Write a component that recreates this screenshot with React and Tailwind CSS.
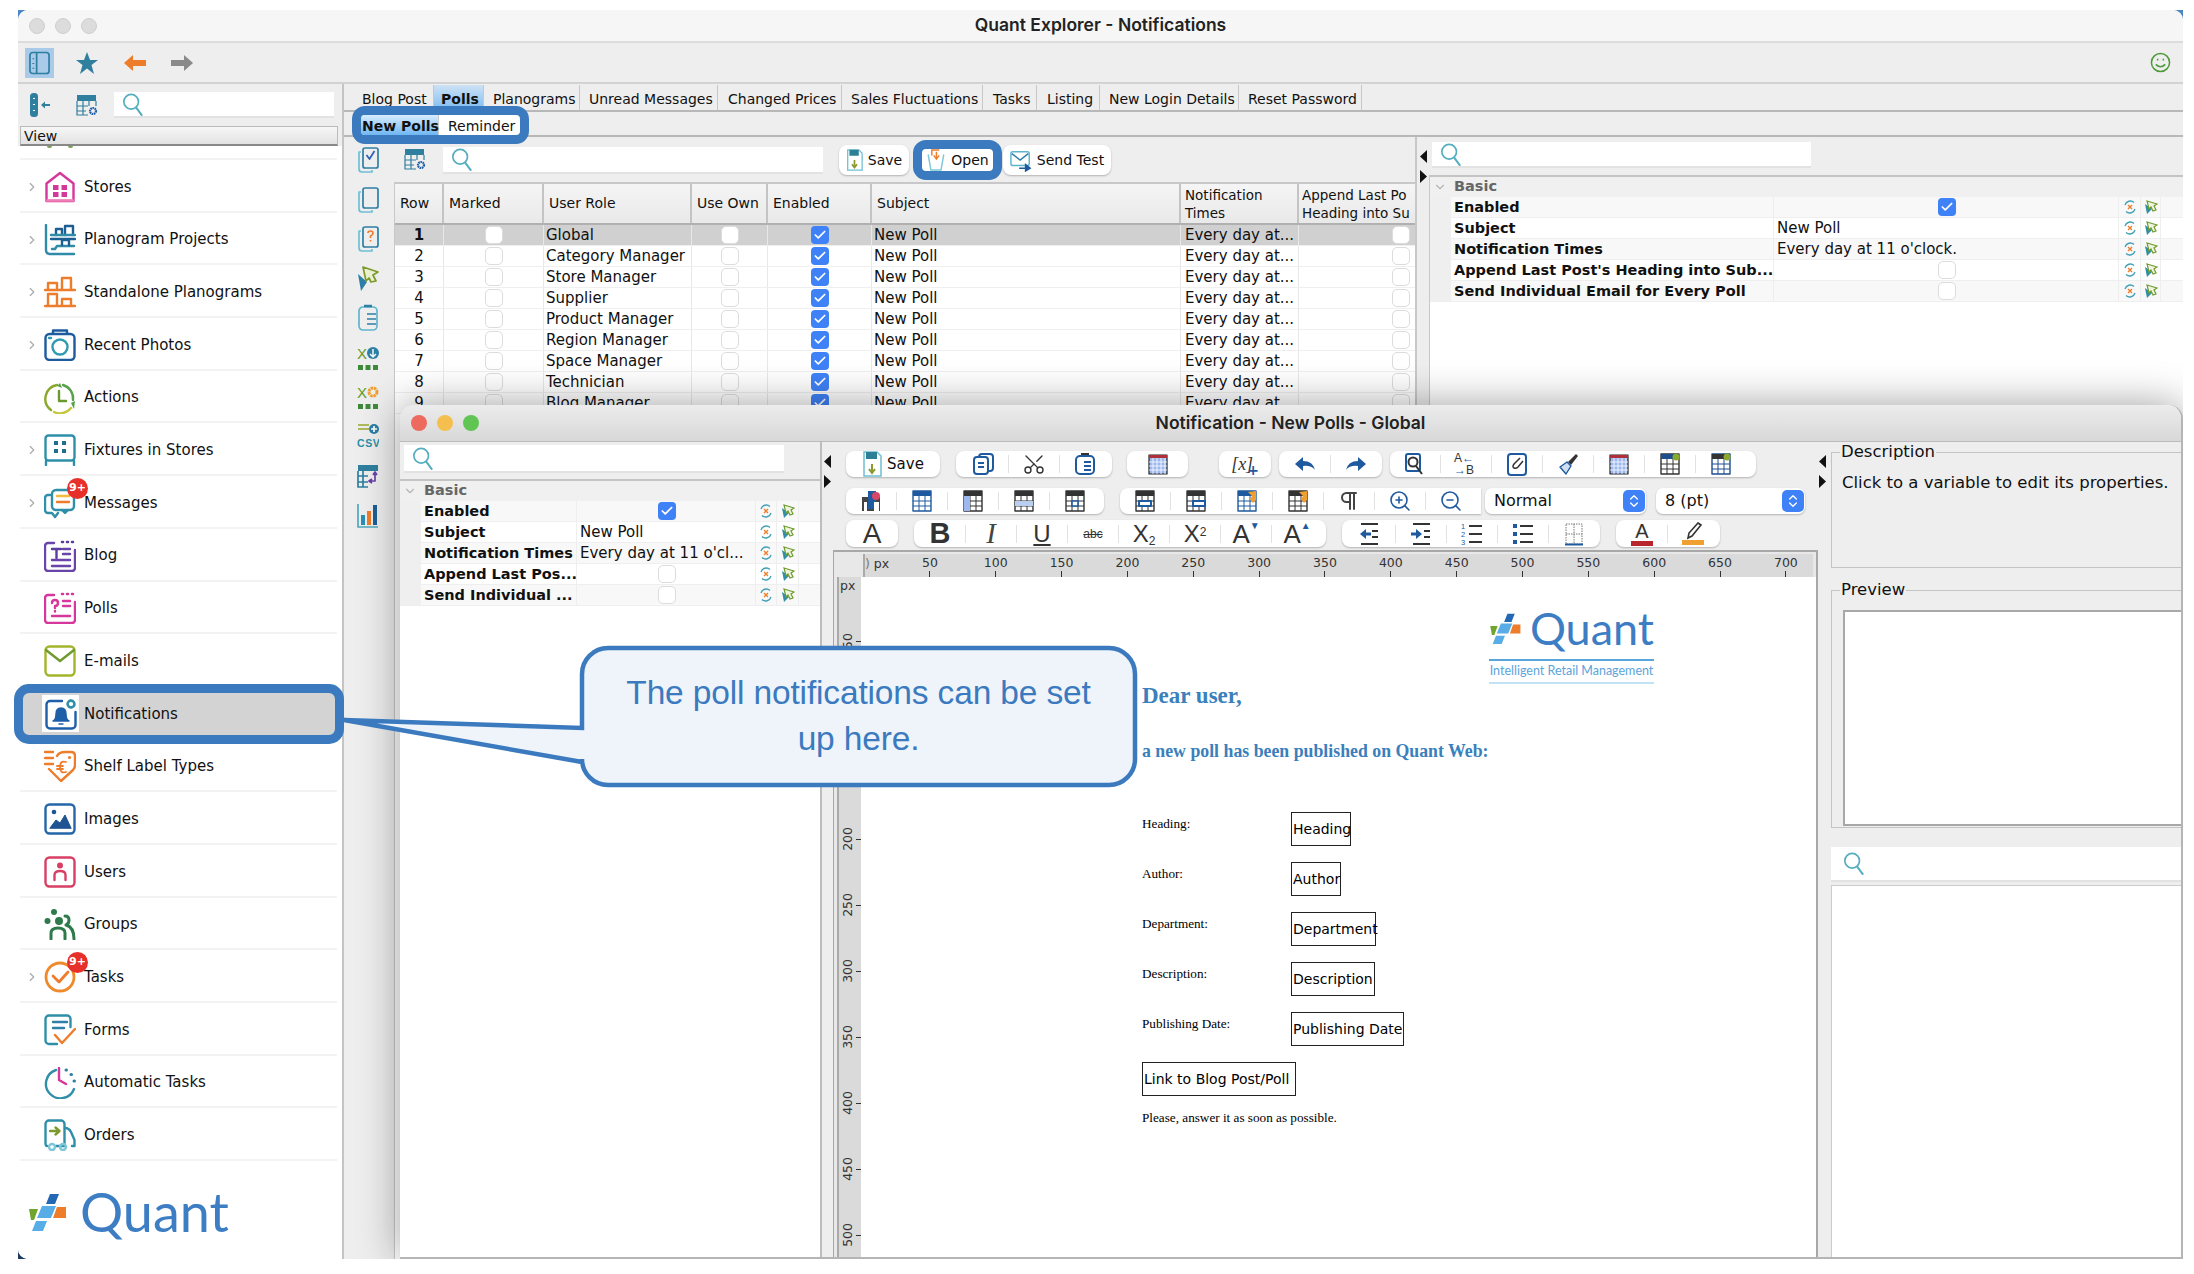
import { ChevronRight, ChevronDown, ChevronsUpDown, Check, Scissors, ZoomIn, ZoomOut, Pilcrow } from "lucide-react";

const Sb = ({ children }) => (
  <svg viewBox="0 0 32 32" className="w-8 h-8 shrink-0" fill="none" strokeWidth="2.4" strokeLinecap="round" strokeLinejoin="round">
    {children}
  </svg>
);

const Ic = ({ children, size = "w-6 h-6" }) => (
  <svg viewBox="0 0 24 24" className={`${size} shrink-0`} fill="none" strokeWidth="2" strokeLinejoin="round">
    {children}
  </svg>
);

// sidebar icons
const icons = {
  stores: (
    <Sb>
      <path d="M2.500 30V12.500L16 2l13.500 10.500V30z" stroke="#d6379a" />
      <path d="M9 14h5.500v5H9zM17.500 14H23v5h-5.500zM9 21h5.500v5H9zM17.500 21H23v5h-5.500z" fill="#d6379a" />
      <path d="M3 29.500h26" stroke="#ef7fb6" />
    </Sb>
  ),
  projects: (
    <Sb>
      <path d="M2 1v25q0 4 4 4h24" stroke="#2f8ba8" />
      <path d="M7 15h24" stroke="#1d5f92" />
      <path d="M8 25h3l2-3h17" stroke="#2f8ba8" />
      <path d="M12 11V5h6v6M21 11V2h8v9M18 21v-5h7v5" stroke="#1d5f92" />
      <path d="M7 11h24" stroke="#2f8ba8" />
    </Sb>
  ),
  standalone: (
    <Sb>
      <path d="M1 14h30M1 30h30" stroke="#ee7d2b" />
      <path d="M4 13V7h9v6M18 13V2h9v11M4 29V18h9v11M18 29v-6h9v6" stroke="#ee7d2b" />
    </Sb>
  ),
  photos: (
    <Sb>
      <rect x="1.500" y="5" width="29" height="26" rx="4" stroke="#1d5b9e" />
      <path d="M9 4V1.500h14V4" stroke="#1d5b9e" />
      <circle cx="16" cy="18" r="7.500" stroke="#2f9bb3" />
      <path d="M5 9h2" stroke="#2f9bb3" />
    </Sb>
  ),
  actions: (
    <Sb>
      <path d="M13 3A14 14 0 0 0 7 28" stroke="#8aa82b" />
      <path d="M10 30a14 14 0 0 0 17-4" stroke="#c5c73a" />
      <path d="M19 3a14 14 0 0 1 10 15" stroke="#58a14b" />
      <path d="M15 9v10h7" stroke="#6a9a2e" />
      <path d="M27 21l4-2-1 8zM16 1l-3 3 5 2z" fill="#58a14b" stroke="none" />
    </Sb>
  ),
  fixtures: (
    <Sb>
      <rect x="1.500" y="1.500" width="29" height="25" rx="3" stroke="#2f8fa8" />
      <path d="M2 27v4M30 27v4" stroke="#2f8fa8" />
      <path d="M10 7h4v4h-4zM18 7h4v4h-4zM10 15h4v4h-4zM18 15h4v4h-4z" fill="#1f6f8f" />
    </Sb>
  ),
  messages: (
    <Sb>
      <path d="M6 8H4a3 3 0 0 0-3 3v12a3 3 0 0 0 3 3h4l3 4 3-4" stroke="#2f8fa8" />
      <rect x="8" y="3" width="22" height="20" rx="4" stroke="#2f8fa8" />
      <path d="M13 9h12" stroke="#f3bd3a" />
      <path d="M13 15h12" stroke="#ee7d2b" />
      <path d="M18 23l3 3 3-3" stroke="#2f8fa8" />
    </Sb>
  ),
  blog: (
    <Sb>
      <path d="M10 3H4a3 3 0 0 0-3 3v22a3 3 0 0 0 3 3h24a3 3 0 0 0 3-3V10" stroke="#6a44a8" />
      <path d="M18 2h1M23 2h1M28 2h1" stroke="#5b3da0" strokeWidth="2.600" />
      <path d="M8 9h9M12.500 9v9" stroke="#5b3da0" />
      <path d="M19 9h7M19 14h7M8 20h18M8 26h18" stroke="#6a44a8" />
    </Sb>
  ),
  polls: (
    <Sb>
      <path d="M10 3H4a3 3 0 0 0-3 3v22a3 3 0 0 0 3 3h24a3 3 0 0 0 3-3V10" stroke="#d6379a" />
      <path d="M18 2h1M23 2h1M28 2h1" stroke="#d6379a" strokeWidth="2.600" />
      <path d="M8 11q0-3 3-3t3 3-3 3v2M11 19v.5" stroke="#d6379a" />
      <path d="M19 9h7M19 14h7M8 24h18" stroke="#d6379a" />
    </Sb>
  ),
  emails: (
    <Sb>
      <rect x="1.500" y="1.500" width="29" height="29" rx="4" stroke="#a4b52c" />
      <path d="M2 5l14 11L30 5" stroke="#6f9a2e" />
    </Sb>
  ),
  notifications: (
    <Sb>
      <path d="M17 3H5a3.500 3.500 0 0 0-3.500 3.500V27A3.500 3.500 0 0 0 5 30.500h22a3.500 3.500 0 0 0 3.500-3.500V14" stroke="#1f5fa8" />
      <path d="M8 23q3-1 3-7t5-6q5 0 5 6t3 7zM14 26h4" fill="#1f5fa8" stroke="#1f5fa8" strokeWidth="1.400" />
      <circle cx="26" cy="6" r="3.400" stroke="#2f8fa8" strokeWidth="2.600" strokeDasharray="2 .6" />
    </Sb>
  ),
  labels: (
    <Sb>
      <path d="M1 2h8M1 8h8M1 14h8" stroke="#ee7d2b" />
      <path d="M13 6q2-4 8-4h6q4 0 4 4v9q0 3-2 5L17 31 5 19" stroke="#ee7d2b" />
      <circle cx="25.500" cy="7.500" r="1.600" fill="#ee7d2b" stroke="none" />
      <path d="M22 12q-6-2-6 5t6 5M13 16h6M13 19h6" stroke="#ee7d2b" strokeWidth="1.800" />
    </Sb>
  ),
  images: (
    <Sb>
      <rect x="1.500" y="1.500" width="29" height="29" rx="4" stroke="#2466a8" />
      <circle cx="10" cy="9" r="2.300" fill="#1f5391" stroke="none" />
      <path d="M6 25l6-8 4 3 5-8 6 13z" fill="#1f5391" stroke="#1f5391" strokeWidth="1" />
    </Sb>
  ),
  users: (
    <Sb>
      <rect x="1.500" y="1.500" width="29" height="29" rx="4" stroke="#d83f64" />
      <circle cx="16" cy="9.500" r="3" fill="#d83f64" stroke="none" />
      <path d="M10.500 24v-5q0-4 5.500-4t5.500 4v5" stroke="#d83f64" />
    </Sb>
  ),
  groups: (
    <Sb>
      <circle cx="10" cy="4" r="3" fill="#2e7a4b" stroke="none" />
      <circle cx="3.500" cy="13" r="3" fill="#2e7a4b" stroke="none" />
      <circle cx="15" cy="13" r="4" fill="#2e7a4b" stroke="none" />
      <path d="M7 31v-6q0-5 7-5t7 5v6" stroke="#2e7a4b" strokeWidth="3" />
      <path d="M21 8q4 0 4 4t-3 5q8 2 8 14" stroke="#2e7a4b" strokeWidth="3" />
    </Sb>
  ),
  tasks: (
    <Sb>
      <circle cx="16" cy="16" r="14" stroke="#ee8a2b" strokeWidth="2.800" />
      <path d="M9 15l6 6 9-10" stroke="#ee7d2b" strokeWidth="2.800" />
    </Sb>
  ),
  forms: (
    <Sb>
      <path d="M13 30H5a3.500 3.500 0 0 1-3.500-3.500V5A3.500 3.500 0 0 1 5 1.500h18A3.500 3.500 0 0 1 26.500 5v8" stroke="#2f8fa8" />
      <path d="M9 8h14M9 14h11" stroke="#2f7fa8" />
      <path d="M11 21l7 8L31 15" stroke="#ee7d2b" />
    </Sb>
  ),
  auto: (
    <Sb>
      <path d="M12 3a14.500 14.500 0 1 0 18 19" stroke="#2f8fa8" />
      <path d="M15 1v12l7 4" stroke="#d6379a" />
      <path d="M22 3h.5M27 7.500h.5M30 14h.5" stroke="#2f7fa8" strokeWidth="3" />
    </Sb>
  ),
  orders: (
    <Sb>
      <path d="M3 27q-1.500 0-1.500-3V5a3.500 3.500 0 0 1 3.500-3.500h12A3.500 3.500 0 0 1 20.500 5v22H12" stroke="#2f8fa8" />
      <path d="M21 9q4 0 6 4l3.500 8v6H28" stroke="#2f8fa8" />
      <circle cx="8" cy="28" r="3" stroke="#7fc7d8" />
      <circle cx="19" cy="28" r="3" stroke="#7fc7d8" />
      <path d="M6 12h9M11.500 8.500l4 3.500-4 3.500" stroke="#7c9a2e" />
    </Sb>
  ),
};

const navRows = [
  { key: "stores", label: "Stores", more: true },
  { key: "projects", label: "Planogram Projects", more: true },
  { key: "standalone", label: "Standalone Planograms", more: true },
  { key: "photos", label: "Recent Photos", more: true },
  { key: "actions", label: "Actions" },
  { key: "fixtures", label: "Fixtures in Stores", more: true },
  { key: "messages", label: "Messages", more: true, badge: true },
  { key: "blog", label: "Blog" },
  { key: "polls", label: "Polls" },
  { key: "emails", label: "E-mails" },
  { key: "notifications", label: "Notifications", active: true },
  { key: "labels", label: "Shelf Label Types" },
  { key: "images", label: "Images" },
  { key: "users", label: "Users" },
  { key: "groups", label: "Groups" },
  { key: "tasks", label: "Tasks", more: true, badge: true },
  { key: "forms", label: "Forms" },
  { key: "auto", label: "Automatic Tasks" },
  { key: "orders", label: "Orders" },
];

const NavRow = ({ row }) => {
  if (row.active) {
    return (
      <div className="relative z-10 -ml-[6px] -mr-[7px] -mt-[3px] -mb-[4.300px] h-[60px] shrink-0 flex items-center bg-[#d3d3d3] border-[9px] border-[#3b7abf] rounded-[15px] pl-[19px] gap-[5px]">
        <div className="w-[37px] h-[37px] bg-white flex items-center justify-center">{icons[row.key]}</div>
        <span className="text-[15px] text-[#111]">{row.label}</span>
      </div>
    );
  }
  return (
    <div className="h-[52.700px] shrink-0 flex items-center pt-[3px] border-b-2 border-[#f3f3f3] relative">
      <div className="w-[24px] pl-[5px] shrink-0">
        {row.more && <ChevronRight className="w-[14px] h-[14px] text-[#aaa]" strokeWidth={2} />}
      </div>
      <div className="relative shrink-0">
        {icons[row.key]}
        {row.badge && (
          <span className="absolute z-10 left-[23px] -top-[9px] w-[21px] h-[21px] rounded-full bg-[#e8302a] text-white text-[11px] font-bold flex items-center justify-center">
            9+
          </span>
        )}
      </div>
      <span className="ml-[8px] text-[15px] text-[#111]">{row.label}</span>
    </div>
  );
};

const SearchIcon = () => (
  <svg viewBox="0 0 24 26" className="w-[22px] h-[25px] shrink-0" fill="none" stroke="#55aebf" strokeWidth="1.800" strokeLinecap="round">
    <circle cx="10" cy="10" r="8" />
    <path d="M15.500 16.500l6 8" strokeWidth="2.200" />
  </svg>
);

const SearchBox = ({ className }) => (
  <div className={`bg-white border-b-2 border-[#e2e2e2] flex items-center pl-[8px] ${className}`}>
    <SearchIcon />
  </div>
);

const TableGear = () => (
  <svg viewBox="0 0 22 22" className="w-[22px] h-[22px] shrink-0" fill="none" strokeWidth="1.200">
    <rect x="1" y="1" width="19" height="6" fill="#2f7f9f" />
    <path d="M1 7v14h11M20 7v5M1 12h11M1 17h9M7 7v14M13 7v5" stroke="#2f7f9f" />
    <circle cx="17" cy="17" r="3" stroke="#1f5fa8" strokeWidth="2.200" strokeDasharray="1.600 .6" />
  </svg>
);

const Checkbox = ({ on }) =>
  on ? (
    <span className="w-[18px] h-[18px] rounded-[4px] bg-[#3f82f7] flex items-center justify-center shrink-0">
      <Check className="w-[14px] h-[14px] text-white" strokeWidth={3} />
    </span>
  ) : (
    <span className="block w-[18px] h-[18px] rounded-[5px] bg-white border border-[#dcdcdc] shrink-0" />
  );

const ResetIcon = () => (
  <svg viewBox="0 0 14 14" className="w-[14px] h-[14px]" fill="none" strokeWidth="1.300">
    <path d="M2 5a5.500 5.500 0 0 1 9-2.500M12 9a5.500 5.500 0 0 1-9 2.500" stroke="#3f9fb5" />
    <path d="M5 5l4 4M9 5l-4 4" stroke="#ee7d2b" />
  </svg>
);

const PickIcon = () => (
  <svg viewBox="0 0 14 14" className="w-[14px] h-[14px]" strokeWidth="1.200">
    <path d="M1 4l2 10 5-5z" fill="#2f8fa8" />
    <path d="M3 1l10 3-3 2 2 4-3 1-2-4-2 2z" fill="#f0f5e0" stroke="#6f9a2e" />
  </svg>
);

const PropRow = ({ label, value, check, alt, grid }) => (
  <div className={`grid ${grid} h-[21px] border-b border-[#efefef] ${alt ? "bg-[#f8f8f8]" : "bg-white"}`}>
    <div className="bg-[#efefef]" />
    <div className="pl-[3px] text-[14.500px] font-bold text-[#111] leading-[20px] whitespace-nowrap overflow-hidden border-r border-[#eee]">
      {label}
    </div>
    <div className="flex items-center text-[15px] leading-[20px] text-[#111] pl-[3px] whitespace-nowrap overflow-hidden">
      {check === undefined ? value : <span className="mx-auto -translate-x-[1px]"><Checkbox on={check} /></span>}
    </div>
    <div className="flex items-center justify-center border-l border-[#eee]"><ResetIcon /></div>
    <div className="flex items-center justify-center border-l border-[#eee]"><PickIcon /></div>
    <div className="border-l border-[#eee]" />
  </div>
);

const PropsTable = ({ rows, grid }) => (
  <div className="border-t-2 border-[#c4c4c4]">
    <div className="h-[20px] bg-[#f0f0f0] flex items-center">
      <ChevronDown className="w-[14px] h-[14px] ml-[3px] text-[#b5b5b5]" strokeWidth={2} />
      <span className="ml-[7px] text-[14.500px] font-bold text-[#666]">Basic</span>
    </div>
    {rows.map((r, i) => (
      <PropRow key={r.label} {...r} grid={grid} alt={i % 2 === 0} />
    ))}
  </div>
);

const SplitArrows = ({ className }) => (
  <div className={`flex flex-col items-center pt-[13px] gap-[7px] shrink-0 ${className}`}>
    <svg viewBox="0 0 7 13" className="w-[7px] h-[13px]"><path d="M7 0v13L0 6.500z" fill="#111" /></svg>
    <svg viewBox="0 0 7 13" className="w-[7px] h-[13px]"><path d="M0 0v13l7-6.500z" fill="#111" /></svg>
  </div>
);

const tabs = [
  { label: "Blog Post", w: "w-[71px] pl-0 border-transparent" },
  { label: "Polls", w: "w-[51px] pl-[7px] font-bold bg-gradient-to-b from-[#cde2f5] to-[#7dbcf0] border-[#bbb] border-l" },
  { label: "Planograms", w: "w-[96px] pl-[9px]" },
  { label: "Unread Messages", w: "w-[138px] pl-[9px]" },
  { label: "Changed Prices", w: "w-[124px] pl-[10px]" },
  { label: "Sales Fluctuations", w: "w-[141px] pl-[9px]" },
  { label: "Tasks", w: "w-[54px] pl-[10px]" },
  { label: "Listing", w: "w-[63px] pl-[10px]" },
  { label: "New Login Details", w: "w-[139px] pl-[9px]" },
  { label: "Reset Password", w: "w-[123px] pl-[9px]" },
];

const roles = ["Global", "Category Manager", "Store Manager", "Supplier", "Product Manager", "Region Manager", "Space Manager", "Technician", "Blog Manager"];
const colGrid = "grid grid-cols-[49px_100px_148px_76px_104px_309px_118px_115px]";

const RailIcon = ({ children }) => (
  <svg viewBox="0 0 22 28" className="w-[22px] h-[28px] shrink-0" fill="none" strokeWidth="1.700" strokeLinejoin="round">
    {children}
  </svg>
);

const railIcons = [
  <RailIcon key="a"><rect x="6" y="2" width="15" height="20" rx="2" stroke="#2d7fa5" /><path d="M4 6H2v17q0 3 3 3h10v-2" stroke="#6fc0d4" /><path d="M9.500 9l3 4 5-8" stroke="#2d5fb5" /></RailIcon>,
  <RailIcon key="b"><rect x="6" y="2" width="15" height="20" rx="2" stroke="#2d7fa5" /><path d="M4 6H2v17q0 3 3 3h10v-2" stroke="#6fc0d4" /></RailIcon>,
  <RailIcon key="c"><rect x="6" y="2" width="15" height="20" rx="2" stroke="#2d7fa5" /><path d="M4 6H2v17q0 3 3 3h10v-2" stroke="#6fc0d4" /><path d="M11 8q0-2 2.500-2t2.500 2-2.500 3v2M13.500 15v1.500" stroke="#ee7d2b" /></RailIcon>,
  <RailIcon key="d"><path d="M1 9l3 17 6-9z" fill="#2d7fa5" stroke="none" /><path d="M6 2l15 5-5 3 3 6-5 1-2-4-3 3z" fill="#e8f0d0" stroke="#7c9a2e" /></RailIcon>,
  <RailIcon key="e"><rect x="2" y="3" width="18" height="23" rx="4" stroke="#5fb5cc" /><path d="M7 2h8" stroke="#2d7fa5" strokeWidth="2.500" /><path d="M10 10h9M10 15h9M10 20h9" stroke="#2d7fa5" /></RailIcon>,
  <RailIcon key="f"><text x="0" y="15" fontSize="15" fill="#5e9a2e" fontFamily="Liberation Sans">X</text><circle cx="16" cy="9" r="6" fill="#2d7fa5" /><path d="M16 5v7M13 10l3 3 3-3" stroke="#fff" strokeWidth="1.400" /><path d="M1 21h5v5H1zM8.500 21h5v5h-5zM16 21h5v5h-5z" fill="#3f8a3a" /></RailIcon>,
  <RailIcon key="g"><text x="0" y="15" fontSize="15" fill="#5e9a2e" fontFamily="Liberation Sans">X</text><circle cx="16" cy="9" r="4" stroke="#f0a030" strokeWidth="3" strokeDasharray="2.500 .7" /><path d="M1 21h5v5H1zM8.500 21h5v5h-5zM16 21h5v5h-5z" fill="#3f8a3a" /></RailIcon>,
  <RailIcon key="h"><path d="M1 2h11M1 6h11" stroke="#9aa82e" /><circle cx="17" cy="6" r="5" fill="#2d7fa5" /><path d="M17 3v6M14 6h6" stroke="#fff" /><text x="0" y="24" fontSize="10.500" fontWeight="bold" fill="#2d8fa5" fontFamily="Liberation Sans" letterSpacing=".6">CSV</text></RailIcon>,
  <RailIcon key="i"><rect x="1" y="3" width="20" height="6" fill="#2f7f9f" /><path d="M1 9v16h10M1 14h10M1 20h10M6 9v16" stroke="#2f7f9f" /><path d="M18 11v8h-5M16 13l2-3 2 3M15 17l-3 2 3 2" stroke="#6a3fa8" /></RailIcon>,
  <RailIcon key="j"><path d="M1 2v23h20" stroke="#4fa8c0" /><path d="M4 13h4v10H4z" fill="#2d8fb5" /><path d="M10 9h4v14h-4z" fill="#ee7d2b" /><path d="M16 3h4v20h-4z" fill="#1f5f95" /></RailIcon>,
];

const Btn = ({ children, className }) => (
  <div className={`flex items-center justify-center gap-[5px] bg-white rounded-[8px] shadow-[0_1px_2px_rgba(0,0,0,0.25)] ${className}`}>
    {children}
  </div>
);

// toolbar group: icon slots spaced evenly with thin separators between them
const Group = ({ children, className }) => (
  <div className={`flex items-center gap-[13px] bg-white rounded-[8px] shadow-[0_1px_2px_rgba(0,0,0,0.25)] ${className}`}>
    {children}
  </div>
);

const Slot = ({ children }) => <span className="w-6 h-6 shrink-0 flex items-center justify-center">{children}</span>;

const SaveIcon = ({ cls = "w-[20px] h-[26px]" }) => (
  <svg viewBox="0 0 20 26" className={cls} fill="none" strokeWidth="1.500">
    <path d="M2 1h13l4 4v20H2z" stroke="#6fc0d4" fill="#fff" />
    <path d="M4 1h11v7H4z" fill="#2d7f95" />
    <path d="M10 13v8M7 18l3 4 3-4" stroke="#8a9a2e" strokeWidth="2" />
  </svg>
);

const Sep = () => <span className="w-px h-[18px] bg-[#e2e2e2] shrink-0" />;

const Grid = ({ top = "#333", frame = "#333", children }) => (
  <Ic>
    <rect x="3" y="2" width="18" height="20" stroke={frame} fill="#fff" strokeWidth="1.400" />
    <rect x="3" y="2" width="18" height="5" fill={top} />
    <path d="M9 7v15M15 7v15M3 12h18M3 17h18" stroke={frame} strokeWidth="1" />
    {children}
  </Ic>
);

const navy = "#1f5a9e";
const Wrench = () => <path d="M13 3l8-1v9l-3 3-3-4 2-3z" fill="#f0a030" />;
const AddMark = () => <circle cx="18" cy="5" r="3.500" fill="#8aa82e" />;

const Calendar = () => (
  <Ic>
    <rect x="3" y="3" width="18" height="19" stroke="#222" fill="#9db8ef" strokeWidth="1.200" />
    <rect x="3" y="3" width="18" height="3" fill="#b0303a" />
    <path d="M7 6v16M11 6v16M15 6v16M19 6v16M3 10h18M3 14h18M3 18h18" stroke="#fff" strokeWidth=".8" />
  </Ic>
);

const Letter = ({ children, className }) => <span className={`font-['Liberation_Sans',sans-serif] text-[#333] leading-none ${className}`}>{children}</span>;

const Ruler = () => {
  const marks = [];
  for (let i = 50; i <= 700; i += 50) marks.push(i);
  return (
    <div className="ml-[29px] mr-[3px] h-[23px] bg-[#dadada] flex border-l-2 border-[#aaa] text-[13px] text-[#333] overflow-hidden">
      <div className="w-[32px] shrink-0 text-[12.500px] leading-[20px] whitespace-nowrap">
        <span className="text-[#777]">)</span> px
      </div>
      {marks.map((m) => (
        <div key={m} className="w-[65.850px] shrink-0 flex flex-col items-center">
          <span className="leading-[17px] h-[17px] text-[12.500px]">{m}</span>
          <span className="w-px h-[6px] bg-[#333]" />
        </div>
      ))}
    </div>
  );
};

const SideRuler = () => {
  const marks = [50, 100, 150, 200, 250, 300, 350, 400, 450, 500];
  return (
    <div className="w-[24px] ml-[3px] shrink-0 bg-[#dadada] border-l-2 border-[#aaa] text-[12.500px] text-[#333] overflow-hidden">
      <div className="h-[31px] leading-[18px] pl-[1px]">px</div>
      {marks.map((m) => (
        <div key={m} className="h-[66px] flex items-center justify-end">
          <span className="[writing-mode:vertical-rl] rotate-180 leading-[14px]">{m}</span>
          <span className="w-[5px] h-px bg-[#333] ml-[1px]" />
        </div>
      ))}
    </div>
  );
};

const Mark = ({ cls }) => (
  <svg viewBox="0 0 38 38" className={cls}>
    <path d="M22 1h9l-4 10h-9z" fill="#2467b2" />
    <path d="M14 13h14l-5 12H9z" fill="#58ade6" />
    <path d="M1 16h9l-4 11H3z" fill="#6fa52b" />
    <path d="M29 14h9v11h-13z" fill="#ee7d2b" />
    <path d="M8 28h11l-4 10H4z" fill="#58ade6" />
  </svg>
);

const VarBox = ({ children, className }) => (
  <span className={`inline-flex items-center border-[1.500px] border-[#222] font-['DejaVu_Sans',sans-serif] text-[14px] text-black pl-[1px] whitespace-nowrap ${className}`}>{children}</span>
);

const docFields = [
  { label: "Heading:", box: "Heading", w: "w-[60px]" },
  { label: "Author:", box: "Author", w: "w-[50px]" },
  { label: "Department:", box: "Department", w: "w-[85px]" },
  { label: "Description:", box: "Description", w: "w-[84px]" },
  { label: "Publishing Date:", box: "Publishing Date", w: "w-[113px]" },
];

const TITLE = "font-['Inter',sans-serif] font-semibold text-[17.500px] text-[#222]";

const SelectBox = ({ label, className }) => (
  <div className={`flex items-center justify-between bg-white rounded-[7px] shadow-[0_1px_2px_rgba(0,0,0,0.25)] text-[16px] pl-[9px] pr-[1px] ${className}`}>
    <span>{label}</span>
    <span className="w-[22px] h-[22px] rounded-[5px] bg-[#3f82f7] flex items-center justify-center">
      <ChevronsUpDown className="w-[16px] h-[18px] text-white" strokeWidth={2} />
    </span>
  </div>
);

const InnerWindow = () => (
  <div className="absolute left-[382px] top-[395px] w-[1783px] h-[854px] rounded-t-[14px] bg-[#eeeeee] border-r-2 border-b-2 border-[#b5b5b5] shadow-[0_0_42px_rgba(0,0,0,0.38)] flex flex-col">
    <div className="h-[37px] shrink-0 rounded-t-[14px] bg-gradient-to-b from-[#ececec] to-[#d8d8d8] border-b border-[#bbb] flex items-center justify-center relative">
      <div className="absolute left-[11px] flex gap-[10px]">
        <span className="w-4 h-4 rounded-full bg-[#ec6a5e]" />
        <span className="w-4 h-4 rounded-full bg-[#f4bf4f]" />
        <span className="w-4 h-4 rounded-full bg-[#61c554]" />
      </div>
      <span className={TITLE}>Notification - New Polls - Global</span>
    </div>
    <div className="flex-1 flex min-h-0">
      <div className="w-[422px] shrink-0 flex flex-col border-r-2 border-[#bdbdbd]">
        <div className="h-[37px] shrink-0 pl-[4px] pt-[3px]">
          <SearchBox className="w-[380px] h-[28px]" />
        </div>
        <div className="flex-1 bg-white">
          <PropsTable
            grid="grid-cols-[21px_156px_178px_21px_22px_22px]"
            rows={[
              { label: "Enabled", check: true },
              { label: "Subject", value: "New Poll" },
              { label: "Notification Times", value: "Every day at 11 o'cl..." },
              { label: "Append Last Pos...", check: false },
              { label: "Send Individual ...", check: false },
            ]}
          />
        </div>
      </div>
      <SplitArrows className="w-[11px]" />
      <div className="w-[985px] shrink-0 flex flex-col">
        <div className="pl-[13px] pt-[9px] h-[108px] shrink-0 flex flex-col">
          <div className="flex h-[26px]">
            <Btn className="w-[94px]"><SaveIcon /><span className="text-[15px] text-[#111]">Save</span></Btn>
            <Group className="w-[156px] ml-[16px] pl-[15px]">
              <Ic><rect x="8" y="2" width="14" height="17" rx="3" stroke={navy} /><rect x="3" y="5" width="14" height="17" rx="3" stroke={navy} fill="#fff" /><path d="M7 11h6M7 15h6" stroke={navy} /></Ic>
              <Sep />
              <Scissors className="w-6 h-6 text-[#333] -rotate-90" strokeWidth={1.400} />
              <Sep />
              <Ic><rect x="3" y="4" width="18" height="18" rx="4" stroke={navy} /><path d="M8 2h8" stroke="#333" strokeWidth="2" /><path d="M11 10h7M11 14h7M11 18h7" stroke={navy} /></Ic>
            </Group>
            <Btn className="w-[61px] ml-[15px]"><Calendar /></Btn>
            <Btn className="w-[52px] ml-[31px] !gap-0">
              <span className="font-['Liberation_Serif',serif] italic text-[18px] text-[#333]">[x]</span>
              <span className="text-[#1f5a9e] text-[14px] font-bold -ml-[6px] mt-[12px] leading-none">+</span>
            </Btn>
            <Group className="w-[103px] ml-[8px] pl-[14px]">
              <Ic><path d="M2 12l8-7v4q10 0 12 9-4-5-12-4v5z" fill={navy} /></Ic>
              <Sep />
              <Ic><path d="M22 12l-8-7v4Q4 9 2 18q4-5 12-4v5z" fill={navy} /></Ic>
            </Group>
            <Group className="w-[366px] ml-[8px] pl-[13px]">
              <Ic><rect x="3" y="2" width="14" height="17" rx="2" stroke={navy} /><circle cx="10" cy="10" r="4.500" stroke="#333" /><path d="M13 14l6 8" stroke="#333" /></Ic>
              <Sep />
              <div className="w-6 h-6 shrink-0 flex flex-col text-[12px] leading-[12px] text-[#333] font-['Liberation_Sans',sans-serif]"><span>A<span className="text-[#1f5a9e]">←</span></span><span><span className="text-[#1f5a9e]">→</span>B</span></div>
              <Sep />
              <Ic><rect x="3" y="2" width="18" height="21" rx="3" stroke={navy} /><path d="M15 6l-6 6q-2 3 0 4t4-1l5-6" stroke="#333" strokeWidth="1.500" /></Ic>
              <Sep />
              <Ic><path d="M20 2l2 2-7 9-3-3z" fill="#333" /><path d="M11 10l-7 5 6 7 5-8z" fill="#cfe0f0" stroke={navy} strokeWidth="1.400" /></Ic>
              <Sep />
              <Calendar />
              <Sep />
              <Grid top="#1f4f8f" frame="#333"><AddMark /></Grid>
              <Sep />
              <Grid top="#333" frame="#1f4f8f"><AddMark /></Grid>
            </Group>
          </div>
          <div className="flex h-[26px] mt-[11px]">
            <Group className="w-[258px] pl-[13px]">
              <Ic><path d="M3 8h18v14H3z" fill="#444" /><path d="M9 2h8v18H9z" fill={navy} /><circle cx="17" cy="7" r="4" fill="#d8466a" /><path d="M5 13h3v9H5zM15 13h5v9h-5z" fill="#fff" /></Ic>
              <Sep />
              <Grid top={navy} frame={navy} />
              <Sep />
              <Grid top="#333" frame="#333"><path d="M9 7h-6v15h6z" fill="#9db8ef" /></Grid>
              <Sep />
              <Grid top="#333" frame="#333"><path d="M3 12h18v5H3z" fill="#b8cdf0" /></Grid>
              <Sep />
              <Grid top="#333" frame="#333"><path d="M9 12h6v5H9z" fill="#fff" stroke={navy} strokeWidth="1.600" /></Grid>
            </Group>
            <Group className="w-[361px] ml-[16px] pl-[13px] rounded-r-none">
              <Grid top="#333" frame="#333"><path d="M6 12h12v5H6z" fill="#fff" stroke={navy} /></Grid>
              <Sep />
              <Grid top="#333" frame="#333"><path d="M9 12h12v5H9z" fill="#fff" stroke={navy} /></Grid>
              <Sep />
              <Grid top={navy} frame={navy}><Wrench /></Grid>
              <Sep />
              <Grid top="#333" frame="#333"><Wrench /></Grid>
              <Sep />
              <Pilcrow className="w-6 h-6 text-[#444] shrink-0" strokeWidth={2} />
              <Sep />
              <ZoomIn className="w-6 h-6 text-[#1f5a9e] shrink-0" strokeWidth={1.600} />
              <Sep />
              <ZoomOut className="w-6 h-6 text-[#1f5a9e] shrink-0" strokeWidth={1.600} />
            </Group>
            <SelectBox label="Normal" className="w-[161px] ml-[4px]" />
            <SelectBox label="8 (pt)" className="w-[149px] ml-[10px]" />
          </div>
          <div className="flex h-[27px] mt-[6px]">
            <Btn className="w-[52px]"><Letter className="text-[28px]">A</Letter></Btn>
            <Group className="w-[412px] ml-[16px] pl-[14px]">
              <Slot><Letter className="text-[29px] font-bold">B</Letter></Slot>
              <Sep />
              <Slot><span className="font-['Liberation_Serif',serif] italic text-[29px] leading-none text-[#444]">I</span></Slot>
              <Sep />
              <Slot><Letter className="text-[24px] underline">U</Letter></Slot>
              <Sep />
              <Slot><Letter className="text-[12px] line-through">abc</Letter></Slot>
              <Sep />
              <Slot><Letter className="text-[24px]">X<sub className="text-[12px]">2</sub></Letter></Slot>
              <Sep />
              <Slot><Letter className="text-[24px]">X<sup className="text-[12px]">2</sup></Letter></Slot>
              <Sep />
              <Slot><Letter className="text-[26px] whitespace-nowrap">A<span className="text-[#1f5a9e] text-[10px] align-top">▼</span></Letter></Slot>
              <Sep />
              <Slot><Letter className="text-[26px] whitespace-nowrap">A<span className="text-[#1f5a9e] text-[10px] align-top">▲</span></Letter></Slot>
            </Group>
            <Group className="w-[258px] ml-[16px] pl-[16px]">
              <Ic><path d="M3 2h17M3 22h17M14 9h6M14 15h6" stroke="#333" /><path d="M2 12l6-5v10z" fill={navy} /><path d="M6 12h7" stroke={navy} strokeWidth="3" /></Ic>
              <Sep />
              <Ic><path d="M4 2h17M4 22h17M15 9h6M15 15h6" stroke="#333" /><path d="M13 12l-6-5v10z" fill={navy} /><path d="M2 12h7" stroke={navy} strokeWidth="3" /></Ic>
              <Sep />
              <Ic><path d="M9 4h13M9 12h13M9 20h13" stroke="#333" /><text x="1" y="7" fontSize="7.500" fill={navy} fontFamily="Liberation Sans">1</text><text x="1" y="15" fontSize="7.500" fill={navy} fontFamily="Liberation Sans">2</text><text x="1" y="23" fontSize="7.500" fill={navy} fontFamily="Liberation Sans">3</text></Ic>
              <Sep />
              <Ic><path d="M9 4h13M9 12h13M9 20h13" stroke="#333" /><path d="M2 2h4v4H2zM2 10h4v4H2zM2 18h4v4H2z" fill={navy} /></Ic>
              <Sep />
              <Ic><path d="M4 2h16v20H4zM12 2v20M4 12h16" stroke="#777" strokeWidth="1" strokeDasharray="1.500 1" /><path d="M3 22.500h18" stroke={navy} /></Ic>
            </Group>
            <Group className="w-[104px] ml-[16px] pl-[14px]">
              <div className="flex flex-col items-center w-6 shrink-0">
                <Letter className="text-[20px]">A</Letter>
                <span className="w-[22px] h-[5px] bg-[#b8252c]" />
              </div>
              <Sep />
              <div className="flex flex-col items-center w-6 shrink-0">
                <svg viewBox="0 0 22 18" className="w-[22px] h-[18px]" fill="none"><path d="M16 1l3 2-9 11-4 2 1-5z" stroke="#333" strokeWidth="1.600" /></svg>
                <span className="w-[22px] h-[5px] bg-[#f0a030]" />
              </div>
            </Group>
          </div>
        </div>
        <div className="flex-1 min-h-0 bg-[#e8e8e8] border-t-2 border-l border-r-2 border-[#a8a8a8] pt-[2px] flex flex-col">
          <Ruler />
          <div className="flex-1 flex min-h-0">
            <SideRuler />
            <div className="flex-1 bg-white pl-[281px] pt-[33px] min-w-0">
              <div className="ml-[347px] w-[165px]">
                <div className="flex items-center h-[36px] gap-[9px]">
                  <Mark cls="w-[33px] h-[31px]" />
                  <span className="font-['Lato',sans-serif] text-[45px] leading-none text-[#3d7dc4]">Quant</span>
                </div>
                <div className="mt-[13px] border-t-2 border-b-2 border-t-[#5aa4dc] border-b-[#c2e2f5] h-[25px] flex items-center justify-center font-['Lato',sans-serif] text-[12.500px] text-[#5aa4dc] whitespace-nowrap">
                  Intelligent Retail Management
                </div>
              </div>
              <div className="-mt-[1px] font-['Liberation_Serif',serif] font-bold text-[23px] leading-[26px] text-[#3a80bd]">Dear user,</div>
              <div className="mt-[31px] font-['Liberation_Serif',serif] font-bold text-[17.800px] leading-[22px] text-[#3a80bd] whitespace-nowrap">
                a new poll has been published on Quant Web:
              </div>
              <div className="mt-[50px] flex flex-col gap-[16px] font-['Liberation_Serif',serif]">
                {docFields.map((f) => (
                  <div key={f.label} className="flex h-[34px]">
                    <span className="w-[149px] text-[13.200px] leading-[24px] text-black">{f.label}</span>
                    <VarBox className={f.w}>{f.box}</VarBox>
                  </div>
                ))}
              </div>
              <VarBox className="mt-[16px] w-[154px] h-[34px]">Link to Blog Post/Poll</VarBox>
              <div className="mt-[13px] font-['Liberation_Serif',serif] text-[13.200px] leading-[18px] text-black">Please, answer it as soon as possible.</div>
            </div>
          </div>
        </div>
      </div>
      <SplitArrows className="w-[9px] mr-[4px]" />
      <div className="flex-1 min-w-0 flex flex-col">
        <fieldset className="h-[126px] border border-r-0 border-[#c4c4c4] pl-[10px]">
          <legend className="-ml-[2px] px-[1px] text-[16.500px] leading-[20px] text-[#111]">Description</legend>
          <div className="mt-[11px] text-[16.500px] leading-[20px] text-[#111] whitespace-nowrap">Click to a variable to edit its properties.</div>
        </fieldset>
        <fieldset className="mt-[12px] h-[248px] border border-r-0 border-[#c4c4c4] pl-[11px] pb-[2px]">
          <legend className="-ml-[3px] px-[1px] text-[16.500px] leading-[20px] text-[#111]">Preview</legend>
          <div className="mt-[10px] h-[216px] bg-white border-2 border-[#a8a8a8] border-r-0" />
        </fieldset>
        <SearchBox className="mt-[19px] h-[35px] !pl-[12px]" />
        <div className="mt-[3px] flex-1 bg-white border-t border-l border-[#ccc]" />
      </div>
    </div>
  </div>
);

const Callout = () => (
  <div className="absolute left-[340px] top-[640px] w-[800px] h-[155px] z-20">
    <svg viewBox="0 0 800 155" className="absolute inset-0 w-[800px] h-[155px]">
      <path
        d="M268 8H769a26 26 0 0 1 26 26V119a26 26 0 0 1-26 26H268a26 26 0 0 1-26-26V122L4 80L242 88V34a26 26 0 0 1 26-26Z"
        fill="#eff4fa"
        stroke="#3b7abf"
        strokeWidth="4.500"
      />
    </svg>
    <div className="absolute left-[244px] top-[30px] w-[549px] text-center font-['Liberation_Sans',sans-serif] text-[33.500px] leading-[46px] tracking-[-0.150px] text-[#3b7abf]">
      The poll notifications can be set
      <br />
      up here.
    </div>
  </div>
);

export default function App() {
  return (
    <div className="relative w-[2194px] h-[1274px] bg-white overflow-hidden font-['DejaVu_Sans',sans-serif] text-[#111]">
      <span className="absolute left-[18px] top-[10px] w-[8px] h-[12px] bg-[#4f86c6]" />
      <span className="absolute right-[11px] top-[10px] w-[8px] h-[12px] bg-[#4f86c6]" />
      <span className="absolute left-[18px] top-[1247px] w-[8px] h-[12px] bg-[#1c3a66]" />

      <div className="absolute left-[18px] top-[10px] w-[2165px] h-[1249px] rounded-t-[10px] rounded-bl-[10px] bg-[#eeeeee] flex flex-col">
        <div className="h-[33px] shrink-0 rounded-t-[10px] bg-[#f6f6f6] border-b-2 border-[#dcdcdc] flex items-center justify-center relative">
          <div className="absolute left-[11px] flex gap-[10px]">
            <span className="w-4 h-4 rounded-full bg-[#dcdcdc] border border-[#cfcfcf]" />
            <span className="w-4 h-4 rounded-full bg-[#dcdcdc] border border-[#cfcfcf]" />
            <span className="w-4 h-4 rounded-full bg-[#dcdcdc] border border-[#cfcfcf]" />
          </div>
          <span className={TITLE}>Quant Explorer - Notifications</span>
        </div>

        <div className="h-[41px] shrink-0 border-b-2 border-[#d2d2d2] flex items-center pl-[7px] pr-[12px]">
          <div className="w-[29px] h-[30px] bg-[#a9cbe9] flex items-center justify-center">
            <svg viewBox="0 0 22 24" className="w-[21px] h-[24px]" fill="none" stroke="#2f7f9f" strokeWidth="1.800">
              <rect x="1" y="1" width="20" height="22" rx="3" />
              <path d="M8 1v22" />
              <path d="M4.500 7v1M4.500 12v1M4.500 17v1" strokeWidth="2" />
            </svg>
          </div>
          <svg viewBox="0 0 22 22" className="ml-[22px] w-[22px] h-[22px]">
            <path d="M11 0l3 8h8l-6.500 5 2.500 9-7-5.500L4 22l2.500-9L0 8h8z" fill="#2f7f9f" />
          </svg>
          <svg viewBox="0 0 22 16" className="ml-[26px] w-[22px] h-[16px]">
            <path d="M9 0v5h13v6H9v5L0 8z" fill="#ee7d2b" />
          </svg>
          <svg viewBox="0 0 22 16" className="ml-[25px] w-[22px] h-[16px]">
            <path d="M13 0v5H0v6h13v5l9-8z" fill="#8a8a8a" />
          </svg>
          <svg viewBox="0 0 22 22" className="ml-auto w-[21px] h-[21px]" fill="none" stroke="#4f9a3a" strokeWidth="1.600">
            <circle cx="11" cy="11" r="9.500" />
            <path d="M6 13q5 5 10 0" />
            <path d="M8 7v2M14 7v2" />
          </svg>
        </div>

        <div className="flex-1 flex min-h-0">
          <div className="w-[326px] shrink-0 flex flex-col border-r-2 border-[#c4c4c4]">
            <div className="h-[42px] shrink-0 flex items-center pl-[11px]">
              <svg viewBox="0 0 22 24" className="w-[22px] h-[24px]">
                <rect x="1" y="0" width="8" height="24" rx="3.500" fill="#2f7f9f" />
                <path d="M5 5v1M5 11v1M5 17v1" stroke="#fff" strokeWidth="2" />
                <path d="M12 12l4-3.500v2.500h5v2h-5v2.500z" fill="#2f7f9f" />
              </svg>
              <span className="ml-[25px]"><TableGear /></span>
              <SearchBox className="ml-[16px] w-[220px] h-[26px]" />
            </div>
            <div className="h-[20px] shrink-0 ml-[2px] mr-[4px] bg-gradient-to-b from-[#f7f7f7] to-[#e2e2e2] border border-[#bbb] border-b-2 border-b-[#888] text-[14px] leading-[19px] pl-[3px]">
              View
            </div>
            <div className="flex-1 bg-white rounded-bl-[10px] pl-[2px] pr-[5px] flex flex-col min-h-0">
              <div className="h-[14px] shrink-0 border-b-2 border-[#f3f3f3] pl-[27px] flex gap-[16px]">
                <span className="w-[5px] h-[2px] rounded-b-full bg-[#7ba05b]" />
                <span className="w-[5px] h-[2px] rounded-b-full bg-[#7ba05b]" />
              </div>
              {navRows.map((r) => (
                <NavRow key={r.key} row={r} />
              ))}
              <div className="mt-[31px] pl-[8px] flex items-center gap-[14px] h-[40px]">
                <Mark cls="w-[38px] h-[38px]" />
                <span className="font-['Lato',sans-serif] text-[54px] leading-none text-[#3d7dc4]">Quant</span>
              </div>
            </div>
          </div>

          <div className="flex-1 flex flex-col min-w-0">
            <div className="h-[28px] shrink-0 flex items-end pl-[18px] border-b-2 border-[#b8b8b8]">
              {tabs.map((t) => (
                <div
                  key={t.label}
                  className={`h-[25px] shrink-0 text-[14px] leading-[28px] border-r border-[#c8c8c8] ${t.w}`}
                >
                  {t.label}
                </div>
              ))}
            </div>
            <div className="h-[25px] shrink-0 border-b-2 border-[#b8b8b8] pl-[8px]">
              <div className="relative z-10 -mt-[6px] w-[177px] h-[38px] border-[9px] border-[#3b7abf] rounded-[13px] flex text-[14px] bg-white overflow-hidden">
                <div className="w-[78px] font-bold leading-[22px] pl-[1px] bg-gradient-to-b from-[#d7ecfd] to-[#6fb6f2] border-r border-[#ccc] whitespace-nowrap">New Polls</div>
                <div className="flex-1 leading-[22px] pl-[9px]">Reminder</div>
              </div>
            </div>
            <div className="flex-1 flex min-h-0">
              <div className="w-[50px] shrink-0 flex flex-col items-center gap-[11.500px] pt-[9px] pr-[2px]">
                {railIcons}
              </div>
              <div className="w-[1021px] shrink-0 flex flex-col min-h-0">
                <div className="h-[45px] shrink-0 flex items-start pt-[8px]">
                  <div className="ml-[10px] mt-[3px]"><TableGear /></div>
                  <SearchBox className="ml-[17px] mt-[2px] w-[380px] h-[27px]" />
                  <Btn className="ml-[16px] w-[70px] h-[30px]">
                    <SaveIcon cls="w-[17px] h-[24px]" />
                    <span className="text-[14px]">Save</span>
                  </Btn>
                  <div className="relative z-10 -mt-[5px] ml-[4px] w-[89px] h-[40px] border-[9px] border-[#3b7abf] rounded-[13px] bg-white flex items-center justify-center gap-[6px]">
                    <svg viewBox="0 0 20 24" className="w-[19px] h-[22px]" fill="none" strokeWidth="1.600">
                      <path d="M2 6l3 17h11l3-17" stroke="#7fc7d8" />
                      <path d="M6 7V1h8" stroke="#ee7d2b" />
                      <path d="M11 3v8M8 7l3 4 3-4" stroke="#ee7d2b" />
                    </svg>
                    <span className="text-[14px]">Open</span>
                  </div>
                  <Btn className="ml-[1px] w-[108px] h-[30px]">
                    <svg viewBox="0 0 24 24" className="w-[22px] h-[24px]" fill="none" strokeWidth="1.600">
                      <rect x="1" y="3" width="20" height="15" rx="2" stroke="#5fb5cc" />
                      <path d="M2 5l9 7 9-7" stroke="#2d7fa5" />
                      <path d="M10 21h11M17 17l5 4-5 3z" stroke="#1f5a9e" fill="#1f5a9e" />
                    </svg>
                    <span className="text-[14px]">Send Test</span>
                  </Btn>
                </div>
                <div className="flex-1 bg-white border-t-2 border-l border-[#c8c8c8] overflow-hidden min-h-0">
                  <div className={`${colGrid} h-[41px] bg-gradient-to-b from-[#f5f5f5] to-[#e9e9e9] border-b-2 border-[#b0b0b0] text-[14px] text-[#111]`}>
                    {["Row", "Marked", "User Role", "Use Own", "Enabled", "Subject"].map((h) => (
                      <div key={h} className="flex items-center pl-[5px] border-r-2 border-[#c4c4c4] whitespace-nowrap">{h}</div>
                    ))}
                    <div className="flex items-center pl-[4px] leading-[18px] text-[13.500px] border-r-2 border-[#c4c4c4]">Notification<br />Times</div>
                    <div className="flex items-center pl-[3px] leading-[18px] text-[13.500px] whitespace-nowrap">Append Last Po<br />Heading into Su</div>
                  </div>
                  {roles.map((role, i) => (
                    <div key={role} className={`${colGrid} h-[21px] border-b border-[#efefef] text-[15px] leading-[20px] ${i === 0 ? "bg-[#d0d0d0]" : "bg-white"}`}>
                      <div className={`text-center border-r border-[#e8e8e8] ${i === 0 ? "font-bold" : ""}`}>{i + 1}</div>
                      <div className="flex items-center justify-center border-r border-[#e8e8e8]"><Checkbox /></div>
                      <div className="pl-[2px] border-r border-[#e8e8e8] whitespace-nowrap">{role}</div>
                      <div className="flex items-center justify-center border-r border-[#e8e8e8]"><Checkbox /></div>
                      <div className="flex items-center justify-center border-r border-[#e8e8e8]"><Checkbox on /></div>
                      <div className="pl-[2px] border-r border-[#e8e8e8]">New Poll</div>
                      <div className="pl-[4px] border-r border-[#e8e8e8] whitespace-nowrap">Every day at...</div>
                      <div className="flex items-center justify-end pr-[4px]"><Checkbox /></div>
                    </div>
                  ))}
                </div>
              </div>
              <SplitArrows className="w-[14px] border-l-2 border-[#c8c8c8]" />
              <div className="flex-1 flex flex-col min-w-0">
                <div className="h-[38px] shrink-0 pl-[3px] pt-[5px]">
                  <SearchBox className="w-[379px] h-[26px]" />
                </div>
                <div className="flex-1 bg-white border-l border-[#c8c8c8]">
                  <PropsTable
                    grid="grid-cols-[21px_323px_344px_22px_20px_23px]"
                    rows={[
                      { label: "Enabled", check: true },
                      { label: "Subject", value: "New Poll" },
                      { label: "Notification Times", value: "Every day at 11 o'clock." },
                      { label: "Append Last Post's Heading into Sub...", check: false },
                      { label: "Send Individual Email for Every Poll", check: false },
                    ]}
                  />
                </div>
              </div>
            </div>
          </div>
        </div>
        {/* keeps the second window's shadow inside the main window */}
        <div className="absolute inset-0 overflow-hidden pointer-events-none">
          <InnerWindow />
        </div>
      </div>

      <Callout />
    </div>
  );
}
